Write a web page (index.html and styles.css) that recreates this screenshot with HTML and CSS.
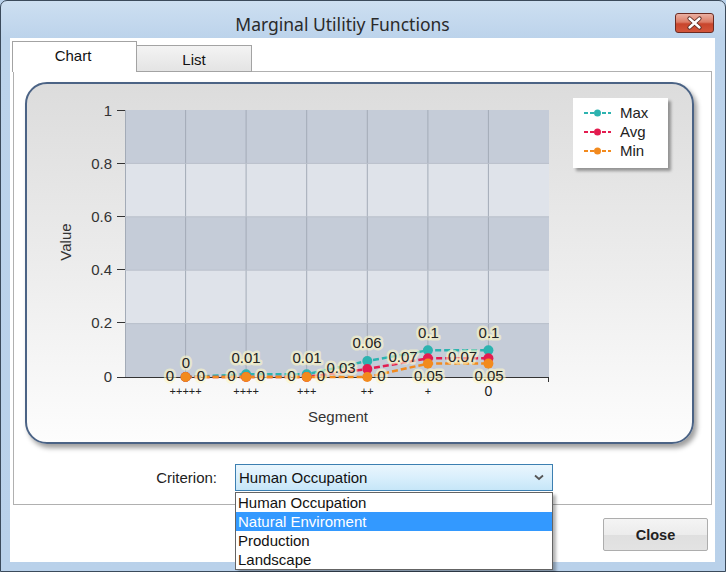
FILE: index.html
```html
<!DOCTYPE html>
<html>
<head>
<meta charset="utf-8">
<link rel="stylesheet" href="styles.css">
</head>
<body>
<div class="window">
  <div class="titlebar">
    <div class="title">Marginal Utilitiy Functions</div>
    <div class="close-x">
      <svg width="39" height="20" viewBox="0 0 39 20">
        <path d="M14.5 5.5 L24.5 14.5 M24.5 5.5 L14.5 14.5" stroke="#5a2a22" stroke-width="4.2" stroke-linecap="round"/>
        <path d="M14.5 5.5 L24.5 14.5 M24.5 5.5 L14.5 14.5" stroke="#ffffff" stroke-width="2.4" stroke-linecap="round"/>
      </svg>
    </div>
  </div>
  <div class="client">
    <div class="tabs">
      <div class="tab tab-active">Chart</div>
      <div class="tab tab-inactive">List</div>
    </div>
    <div class="tabpage">
      <div class="chart-panel">
        <svg class="chart" width="665" height="358" viewBox="27 84 665 358">
          <defs>
            <filter id="sh" x="-20%" y="-20%" width="150%" height="150%">
              <feDropShadow dx="3" dy="3" stdDeviation="1.6" flood-color="#000" flood-opacity="0.35"/>
            </filter>
          </defs>
          <g>
            <rect x="125" y="110" width="424" height="53.4" fill="#c5ccd8"/>
            <rect x="125" y="163.4" width="424" height="53.4" fill="#dfe3ea"/>
            <rect x="125" y="216.8" width="424" height="53.4" fill="#c5ccd8"/>
            <rect x="125" y="270.2" width="424" height="53.4" fill="#dfe3ea"/>
            <rect x="125" y="323.6" width="424" height="53.4" fill="#c5ccd8"/>
          </g>
          <g stroke="#a3abb7" stroke-width="1">
            <line x1="125.5" y1="110" x2="125.5" y2="377"/>
            <line x1="185.6" y1="110" x2="185.6" y2="377"/>
            <line x1="246.1" y1="110" x2="246.1" y2="377"/>
            <line x1="306.7" y1="110" x2="306.7" y2="377"/>
            <line x1="367.3" y1="110" x2="367.3" y2="377"/>
            <line x1="427.9" y1="110" x2="427.9" y2="377"/>
            <line x1="488.4" y1="110" x2="488.4" y2="377"/>
            <line x1="125" y1="163.4" x2="549" y2="163.4" stroke="#b8bfca"/>
            <line x1="125" y1="216.8" x2="549" y2="216.8" stroke="#b8bfca"/>
            <line x1="125" y1="270.2" x2="549" y2="270.2" stroke="#b8bfca"/>
            <line x1="125" y1="323.6" x2="549" y2="323.6" stroke="#b8bfca"/>
          </g>
          <g stroke="#333" stroke-width="1">
            <line x1="117" y1="110.5" x2="125" y2="110.5"/>
            <line x1="117" y1="163.5" x2="125" y2="163.5"/>
            <line x1="117" y1="216.5" x2="125" y2="216.5"/>
            <line x1="117" y1="269.5" x2="125" y2="269.5"/>
            <line x1="117" y1="322.5" x2="125" y2="322.5"/>
            <line x1="117" y1="377.5" x2="549" y2="377.5"/>
            <line x1="548.5" y1="377" x2="548.5" y2="382"/>
            <line x1="185.6" y1="377" x2="185.6" y2="381"/>
            <line x1="246.1" y1="377" x2="246.1" y2="381"/>
            <line x1="306.7" y1="377" x2="306.7" y2="381"/>
            <line x1="367.3" y1="377" x2="367.3" y2="381"/>
            <line x1="427.9" y1="377" x2="427.9" y2="381"/>
            <line x1="488.4" y1="377" x2="488.4" y2="381"/>
          </g>
          <g class="axis-text" text-anchor="end">
            <text x="112" y="116">1</text>
            <text x="112" y="169">0.8</text>
            <text x="112" y="222">0.6</text>
            <text x="112" y="275">0.4</text>
            <text x="112" y="328">0.2</text>
            <text x="112" y="382">0</text>
          </g>
          <g class="cat-text" text-anchor="middle">
            <text x="185.6" y="395">+++++</text>
            <text x="246.1" y="395">++++</text>
            <text x="306.7" y="395">+++</text>
            <text x="367.3" y="395">++</text>
            <text x="427.9" y="395">+</text>
            <text x="488.4" y="396" class="cat-zero">0</text>
          </g>
          <text class="axis-title" x="338" y="422" text-anchor="middle">Segment</text>
          <text class="axis-title" x="0" y="0" text-anchor="middle" transform="translate(71 242) rotate(-90)">Value</text>

          <g fill="none" stroke-width="2.5" stroke-dasharray="6 3">
            <polyline stroke="#2db3b0" points="185.6,377 246.1,374.3 306.7,374.3 367.3,361 427.9,350.3 488.4,350.3"/>
            <polyline stroke="#e31c4f" points="185.6,377 246.1,377 306.7,377 367.3,369 427.9,358.3 488.4,358.3"/>
            <polyline stroke="#f28a1e" points="185.6,377 246.1,377 306.7,377 367.3,377 427.9,363.6 488.4,363.6"/>
          </g>
          <g fill="#2db3b0">
            <circle cx="185.6" cy="377" r="5"/><circle cx="246.1" cy="374.3" r="5"/><circle cx="306.7" cy="374.3" r="5"/>
            <circle cx="367.3" cy="361" r="5"/><circle cx="427.9" cy="350.3" r="5"/><circle cx="488.4" cy="350.3" r="5"/>
          </g>
          <g fill="#e31c4f">
            <circle cx="185.6" cy="377" r="5"/><circle cx="246.1" cy="377" r="5"/><circle cx="306.7" cy="377" r="5"/>
            <circle cx="367.3" cy="369" r="5"/><circle cx="427.9" cy="358.3" r="5"/><circle cx="488.4" cy="358.3" r="5"/>
          </g>
          <g fill="#f28a1e">
            <circle cx="185.6" cy="377" r="5"/><circle cx="246.1" cy="377" r="5"/><circle cx="306.7" cy="377" r="5"/>
            <circle cx="367.3" cy="377" r="5"/><circle cx="427.9" cy="363.6" r="5"/><circle cx="488.4" cy="363.6" r="5"/>
          </g>
          <g class="data-label" text-anchor="middle">
            <text x="186" y="368">0</text>
            <text x="170" y="381">0</text>
            <text x="201" y="381">0</text>
            <text x="246" y="363">0.01</text>
            <text x="231.5" y="381">0</text>
            <text x="261" y="381">0</text>
            <text x="307" y="363">0.01</text>
            <text x="291.5" y="381">0</text>
            <text x="321" y="381">0</text>
            <text x="367" y="348">0.06</text>
            <text x="341" y="373">0.03</text>
            <text x="381.5" y="381">0</text>
            <text x="428.5" y="338">0.1</text>
            <text x="403" y="362">0.07</text>
            <text x="428.5" y="381">0.05</text>
            <text x="489" y="338">0.1</text>
            <text x="462.5" y="362">0.07</text>
            <text x="489" y="381">0.05</text>
          </g>

          <rect x="573" y="98" width="95" height="70" fill="#fff" filter="url(#sh)"/>
          <g stroke-width="2" stroke-dasharray="4 2">
            <line x1="584" y1="113" x2="611" y2="113" stroke="#2db3b0"/>
            <line x1="584" y1="132" x2="611" y2="132" stroke="#e31c4f"/>
            <line x1="584" y1="151" x2="611" y2="151" stroke="#f28a1e"/>
          </g>
          <circle cx="597.5" cy="113" r="3.5" fill="#2db3b0"/>
          <circle cx="597.5" cy="132" r="3.5" fill="#e31c4f"/>
          <circle cx="597.5" cy="151" r="3.5" fill="#f28a1e"/>
          <g class="legend-text">
            <text x="620" y="118">Max</text>
            <text x="620" y="137">Avg</text>
            <text x="620" y="156">Min</text>
          </g>
        </svg>
      </div>
      <div class="criterion-row">
        <div class="crit-label">Criterion:</div>
        <div class="select-wrap">
          <div class="select">
            <span class="select-text">Human Occupation</span>
            <svg class="chev" width="10" height="7" viewBox="0 0 10 7"><path d="M1 1.5 L5 5 L9 1.5" fill="none" stroke="#555" stroke-width="1.8"/></svg>
          </div>
          <div class="dropdown">
            <div class="opt">Human Occupation</div>
            <div class="opt opt-sel">Natural Enviroment</div>
            <div class="opt">Production</div>
            <div class="opt">Landscape</div>
          </div>
        </div>
      </div>
    </div>
    <div class="footer">
      <div class="close-btn">Close</div>
    </div>
  </div>
</div>
</body>
</html>
```
FILE: styles.css
```css
html, body {
  margin: 0;
  padding: 0;
  width: 726px;
  height: 572px;
  overflow: hidden;
  background: #b9d1ea;
}
.window {
  box-sizing: border-box;
  width: 726px;
  height: 572px;
  border: 1px solid #3b4a5b;
  border-radius: 7px 7px 0 0;
  padding: 0 10px 9px 9px;
  background: linear-gradient(180deg, #cddff1 0px, #bcd3eb 37px, #b9d1ea 100%);
  display: flex;
  flex-direction: column;
  font-family: "Liberation Sans", Arial, sans-serif;
}
.titlebar {
  height: 37px;
  display: flex;
  align-items: flex-start;
  flex-shrink: 0;
}
.title {
  flex: 1;
  text-align: center;
  font-family: "Noto Sans", "Open Sans", sans-serif;
  font-size: 17.5px;
  line-height: 22px;
  padding-top: 12px;
  color: #2a2a2a;
}
.close-x {
  width: 39px;
  height: 20px;
  margin-top: 12px;
  margin-right: 1px;
  box-sizing: border-box;
  border: 1px solid #6b2b22;
  border-radius: 3px;
  background: linear-gradient(180deg, #eab0a2 0%, #dc7c66 45%, #c8452c 55%, #d4563b 100%);
  display: flex;
  align-items: center;
  justify-content: center;
}
.close-x svg {
  display: block;
  margin: -1px;
}
.client {
  flex: 1;
  background: #fff;
  padding: 3px 0 0 2px;
  display: flex;
  flex-direction: column;
}
.tabs {
  display: flex;
  align-items: flex-end;
  height: 31px;
  position: relative;
  z-index: 2;
  margin-bottom: -1px;
}
.tab {
  box-sizing: border-box;
  border: 1px solid #a3a3a3;
  border-bottom: none;
  font-size: 15px;
  color: #111;
  text-align: center;
}
.tab-active {
  width: 125px;
  height: 31px;
  background: #fff;
  padding-top: 5px;
  padding-right: 3px;
}
.tab-inactive {
  width: 116px;
  height: 27px;
  margin-left: -1px;
  border-bottom: 1px solid #a3a3a3;
  background: linear-gradient(180deg, #f3f3f3, #e4e4e4);
  padding-top: 5px;
}
.tabpage {
  box-sizing: border-box;
  width: 699px;
  height: 434px;
  margin-left: 1px;
  border: 1px solid #b0b0b0;
  display: flex;
  flex-direction: column;
  position: relative;
  z-index: 1;
}
.chart-panel {
  box-sizing: border-box;
  width: 669px;
  height: 362px;
  margin: 10px 0 0 11px;
  border: 2px solid #4b6385;
  border-radius: 22px;
  background: linear-gradient(180deg, #dcdcdc 0%, #ececec 50%, #fdfdfd 100%);
  box-shadow: 3px 4px 5px rgba(0, 0, 0, 0.38);
  overflow: hidden;
}
.chart {
  display: block;
}
.axis-text text {
  font-family: "Liberation Sans", Arial, sans-serif;
  font-size: 15px;
  fill: #333;
}
.cat-text text {
  font-family: "Liberation Sans", Arial, sans-serif;
  font-size: 11px;
  fill: #222;
}
.cat-text .cat-zero {
  font-size: 14px;
}
.axis-title {
  font-family: "Liberation Sans", Arial, sans-serif;
  font-size: 15px;
  fill: #333;
}
.data-label text {
  font-family: "Liberation Sans", Arial, sans-serif;
  font-size: 15px;
  fill: #222;
  stroke: rgba(253, 248, 200, 0.6);
  stroke-width: 5px;
  stroke-linejoin: round;
  paint-order: stroke;
}
.legend-text text {
  font-family: "Liberation Sans", Arial, sans-serif;
  font-size: 15px;
  fill: #222;
}
.criterion-row {
  display: flex;
  align-items: center;
  margin-top: 20px;
  gap: 18px;
}
.crit-label {
  width: 203px;
  text-align: right;
  font-size: 15px;
  color: #222;
}
.select-wrap {
  position: relative;
  width: 318px;
}
.select {
  box-sizing: border-box;
  height: 27px;
  border: 1px solid #3c7fb1;
  background: linear-gradient(180deg, #eaf6fd 0%, #d9effc 50%, #c6e6f8 100%);
  display: flex;
  align-items: center;
  padding: 0 8px 0 3px;
  font-size: 15px;
  color: #111;
}
.select-text {
  flex: 1;
}
.chev {
  display: block;
}
.dropdown {
  position: absolute;
  top: 28px;
  left: 0;
  width: 318px;
  box-sizing: border-box;
  border: 1px solid #646464;
  background: #fff;
  box-shadow: 3px 3px 3px rgba(0, 0, 0, 0.3);
  z-index: 5;
}
.opt {
  height: 19px;
  line-height: 19px;
  padding-left: 2px;
  font-size: 15px;
  color: #111;
}
.opt-sel {
  background: #3399ff;
  color: #fff;
}
.footer {
  display: flex;
  justify-content: flex-end;
  padding: 13px 7px 0 0;
}
.close-btn {
  box-sizing: border-box;
  width: 105px;
  height: 33px;
  border: 1px solid #adadad;
  border-radius: 2px;
  background: linear-gradient(180deg, #f4f4f4 0%, #ececec 50%, #dfdfdf 51%, #e3e3e3 100%);
  font-weight: bold;
  font-size: 14.5px;
  color: #222;
  display: flex;
  align-items: center;
  justify-content: center;
}
```
